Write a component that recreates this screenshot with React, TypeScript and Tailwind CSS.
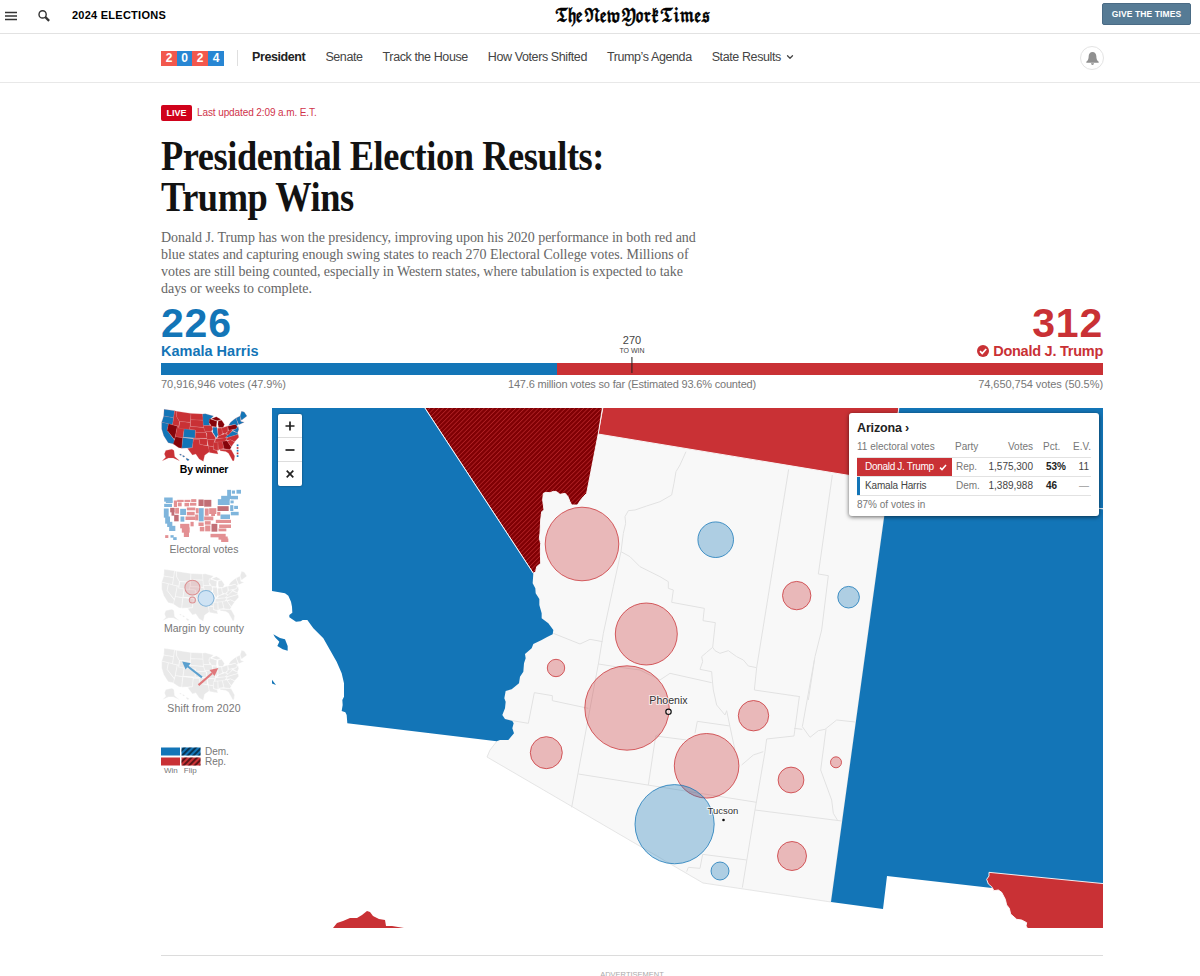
import React from 'react'
import { ChevronDown } from 'lucide-react'

type Party = 'rep' | 'dem'

const DEM = '#1375b7'
const REP = '#c93135'
const FLIP = '#85040a'

const navItems = ['Senate', 'Track the House', 'How Voters Shifted', 'Trump’s Agenda']

// [color, polygon points]
const states: [string, string][] = [
  [DEM, '45,30 76,34 73,55 44,50'],
  [DEM, '44,50 73,55 70,76 38,68'],
  [DEM, '38,68 58,73 54,92 76,122 74,133 57,129 44,108 38,88'],
  [FLIP, '58,73 84,79 77,116 74,118 54,92'],
  [REP, '76,34 81,36 82,52 90,66 88,80 70,76 73,55'],
  [REP, '81,36 124,42 122,68 90,66 82,52'],
  [REP, '91,66 122,69 120,91 88,88'],
  [REP, '84,79 88,80 88,86 104,88 100,114 78,111'],
  [FLIP, '78,111 100,114 97,145 88,144 72,133'],
  [DEM, '104,88 137,91 136,115 101,113'],
  [DEM, '100,114 131,117 128,144 97,145'],
  [REP, '124,42 158,44 160,62 123,61'],
  [REP, '123,61 160,62 161,83 122,81'],
  [REP, '121,81 161,84 167,99 137,98 137,91 120,90'],
  [REP, '137,98 168,99 171,116 136,115'],
  [REP, '131,116 171,117 172,137 150,134 148,119 131,119'],
  [REP, '131,119 148,119 150,134 175,139 178,156 164,166 160,184 148,177 138,162 128,165 114,146 128,144'],
  [DEM, '158,44 166,43 190,50 177,62 179,78 160,78'],
  [REP, '160,78 184,78 188,88 183,96 164,95'],
  [REP, '164,95 184,96 196,114 194,120 171,119 170,101'],
  [REP, '171,119 194,120 190,140 175,139'],
  [REP, '175,139 190,141 190,150 200,152 203,162 178,158'],
  [FLIP, '178,58 200,65 198,82 184,80 177,68'],
  [DEM, '188,83 200,83 203,105 198,115 188,98'],
  [FLIP, '204,64 214,62 222,75 218,84 205,84 203,74'],
  [FLIP, '184,58 198,52 212,60 200,64'],
  [REP, '202,86 214,85 217,103 204,110'],
  [REP, '214,85 232,79 232,95 224,103 216,100'],
  [REP, '200,116 206,108 224,102 232,106 224,116'],
  [REP, '196,117 230,114 224,126 194,128'],
  [REP, '190,128 203,127 203,152 190,149'],
  [REP, '203,127 216,126 221,146 208,148 204,152'],
  [FLIP, '216,125 230,123 242,142 238,149 221,147'],
  [REP, '208,148 238,149 242,150 252,168 250,182 246,182 234,160 226,155 210,153'],
  [REP, '230,124 240,120 252,127 242,141'],
  [REP, '226,122 232,113 262,104 264,113 252,126 240,120'],
  [DEM, '224,114 234,104 246,94 260,100 262,104 232,113'],
  [REP, '232,96 236,90 246,92 234,106 226,104'],
  [FLIP, '232,80 256,74 260,82 256,88 234,92'],
  [DEM, '234,78 240,68 250,60 256,56 262,74 258,80 254,74'],
  [DEM, '246,91 256,88 262,80 264,90 260,100'],
  [DEM, '256,56 268,50 270,66 280,68 264,76'],
  [DEM, '268,50 272,36 280,38 288,50 272,62'],
  [REP, '50,152 68,148 74,152 76,170 90,182 72,174 58,174 40,182 50,172 46,162'],
  [DEM, '91,162 96,163 95,167 91,165'],
  [DEM, '100,166 106,169 103,172 99,169'],
  [DEM, '110,174 119,179 115,183 110,179'],
]

// [color, x, y, width, height]
const evBlocks: [string, number, number, number, number][] = [
  ['d', 43, 293, 24, 11], ['d', 48, 304, 19, 4], ['d', 43, 312, 22, 8], ['d', 42, 326, 13, 26], ['d', 46, 350, 13, 20],
  ['d', 52, 366, 14, 14], ['d', 58, 378, 17, 14], ['f', 61, 324, 12, 12], ['f', 65, 336, 7, 10], ['r', 72, 302, 8, 18],
  ['r', 82, 300, 18, 5], ['r', 84, 308, 10, 10], ['r', 104, 300, 16, 5], ['r', 124, 298, 14, 7], ['r', 104, 309, 12, 9],
  ['r', 120, 309, 18, 7], ['r', 76, 324, 10, 16], ['f', 73, 345, 12, 18], ['d', 91, 327, 16, 17], ['r', 111, 323, 24, 7],
  ['r', 111, 336, 22, 9], ['d', 92, 350, 10, 14], ['r', 107, 350, 28, 9], ['r', 91, 372, 26, 12], ['r', 96, 383, 22, 14],
  ['r', 102, 396, 14, 14], ['r', 122, 366, 8, 12], ['f', 146, 299, 14, 18], ['f', 163, 300, 20, 19],
  ['d', 147, 325, 13, 38], ['r', 138, 325, 7, 14], ['r', 136, 344, 8, 16], ['r', 165, 326, 10, 20], ['r', 178, 325, 20, 16],
  ['r', 184, 340, 10, 7], ['r', 163, 350, 26, 10], ['f', 203, 319, 32, 13], ['d', 204, 298, 34, 16], ['d', 214, 288, 24, 12],
  ['d', 232, 270, 10, 26], ['d', 246, 272, 8, 8], ['d', 260, 270, 12, 10], ['d', 243, 288, 20, 9], ['d', 242, 302, 8, 7],
  ['d', 241, 316, 8, 16], ['d', 253, 318, 10, 8], ['d', 243, 336, 22, 9], ['d', 212, 344, 27, 12], ['r', 202, 336, 8, 10],
  ['r', 198, 360, 44, 8], ['r', 208, 374, 34, 9], ['r', 146, 368, 14, 9], ['r', 165, 364, 16, 9], ['r', 150, 381, 12, 12],
  ['r', 166, 377, 14, 16], ['f', 185, 372, 16, 22], ['r', 206, 386, 22, 7], ['r', 182, 402, 44, 9], ['r', 206, 410, 26, 8],
  ['r', 214, 416, 20, 9], ['d', 62, 406, 8, 6], ['d', 70, 412, 9, 7], ['r', 46, 406, 8, 7],
]
const evColor: Record<string, string> = { d: '#7fb5dc', r: '#e39093', f: '#c26f76' }

const circles: [Party, number, number, number][] = [
  ['rep', 582, 544, 36.8],
  ['dem', 715.7, 539.7, 17.8],
  ['rep', 796.7, 595.6, 14.2],
  ['dem', 848.6, 597.2, 10.8],
  ['rep', 646.3, 634, 31],
  ['rep', 556, 668, 8.7],
  ['rep', 627, 708, 42.2],
  ['rep', 546.3, 752.7, 16],
  ['rep', 753.5, 715.7, 15.2],
  ['rep', 706.6, 765.8, 32.3],
  ['rep', 791, 780, 12.9],
  ['rep', 836, 762.3, 5.5],
  ['dem', 674.6, 824.2, 39.6],
  ['dem', 720, 871, 9],
  ['rep', 792, 856, 14.5],
]

const MastheadBar = () => (
  <header className="flex h-[34px] items-start border-b border-[#e2e2e2]">
    <div className="flex w-[532px] items-center pt-[6px] pl-[5px]">
      <svg width="12" height="10" viewBox="0 0 12 10" className="mt-px">
        <path d="M0 1.5h12M0 5h12M0 8.5h12" stroke="#333" strokeWidth="1.6" />
      </svg>
      <svg width="12" height="12" viewBox="0 0 12 12" className="mt-px ml-[21px]">
        <circle cx="4.6" cy="4.4" r="3.6" fill="none" stroke="#333" strokeWidth="1.4" />
        <path d="M7.3 7l3.8 3.8" stroke="#333" strokeWidth="2.4" />
      </svg>
      <span className="ml-[22px] text-[11px] leading-[18px] font-bold tracking-[0.25px] text-black">2024 ELECTIONS</span>
    </div>
    <div className="flex w-[200px] justify-center pt-[4px] font-['DejaVu_Math_TeX_Gyre','DejaVu_Sans',serif] text-[18px] leading-[26px] whitespace-nowrap text-black">
      <span className="origin-center scale-x-[0.765] tracking-[-1.4px] [-webkit-text-stroke:0.6px_#000] [word-spacing:-2px]">𝕿𝖍𝖊 𝕹𝖊𝖜 𝖄𝖔𝖗𝖐 𝕿𝖎𝖒𝖊𝖘</span>
    </div>
    <div className="flex flex-1 justify-end pt-[3px] pr-[9px]">
      <button className="h-[22px] w-[89px] rounded-[2px] border border-[#4a6b85] bg-[#567b95] text-[8.5px] font-bold tracking-[0.1px] text-white">
        GIVE THE TIMES
      </button>
    </div>
  </header>
)

const SectionNav = () => (
  <nav className="h-[49px] border-b border-[#e8e8e8]">
    <div className="ml-[161px] flex h-12 w-[943px] items-center text-[12.5px] tracking-[-0.4px] text-[#444]">
      <div className="flex text-center text-[12px] leading-[15px] font-bold text-white">
        <span className="w-4 bg-[#f2584d]">2</span>
        <span className="w-[15px] bg-[#2886d3]">0</span>
        <span className="w-4 bg-[#f2584d]">2</span>
        <span className="w-4 bg-[#2886d3]">4</span>
      </div>
      <div className="mr-[14px] ml-[13px] h-4 w-px bg-[#dfdfdf]" />
      <div className="flex gap-5 pb-[2px] whitespace-nowrap">
        <span className="font-bold text-[#222]">President</span>
        {navItems.map((item) => (
          <span key={item}>{item}</span>
        ))}
        <span className="flex items-center">
          State Results
          <ChevronDown className="ml-1 size-[10px]" strokeWidth={3} />
        </span>
      </div>
      <div className="ml-auto flex size-6 items-center justify-center rounded-full border border-[#e4e4e4]">
        <svg width="13" height="13" viewBox="0 0 13 13" fill="#909090">
          <path d="M6.5 0C8.9 0 10.2 1.7 10.3 4c.1 3 .6 4.3 2.4 5.8v1H.3v-1C2.1 8.3 2.6 7 2.7 4 2.8 1.7 4.1 0 6.5 0zM5 11.3h3c-.1 1-.7 1.6-1.5 1.6S5.1 12.3 5 11.3z" />
        </svg>
      </div>
    </div>
  </nav>
)

const Scoreboard = () => (
  <section className="relative h-[84px]">
    <div className="flex justify-between font-bold">
      <div className="text-[#1375b7]">
        <div className="text-[41px] leading-[36px] tracking-[0.8px]">226</div>
        <div className="text-[14.5px] leading-[20px]">Kamala Harris</div>
      </div>
      <div className="text-right text-[#c93135]">
        <div className="text-[41px] leading-[36px] tracking-[0.8px]">312</div>
        <div className="flex items-center text-[14.5px] leading-[20px] tracking-[-0.25px]">
          <svg width="12" height="12" viewBox="0 0 12 12" className="mr-1">
            <circle cx="6" cy="6" r="6" fill={REP} />
            <path d="M3 6.2l2.2 2.2L9.2 4" fill="none" stroke="#fff" strokeWidth="1.7" />
          </svg>
          Donald J. Trump
        </div>
      </div>
    </div>
    <div className="mt-[2px] flex h-[12px]">
      <div className="w-[42%] bg-[#1375b7]" />
      <div className="flex-1 bg-[#c93135]" />
    </div>
    <div className="absolute top-[30px] left-1/2 flex -translate-x-1/2 flex-col items-center whitespace-nowrap text-[#444]">
      <span className="text-[11px] leading-[11px]">270</span>
      <span className="mt-[1px] text-[7px] leading-[8px]">TO WIN</span>
      <span className="mt-[2px] h-[16px] w-px bg-[#222]" />
    </div>
    <div className="mt-[3px] flex justify-between text-[11px] leading-[13px] tracking-[-0.05px] text-[#777]">
      <span>70,916,946 votes (47.9%)</span>
      <span className="tracking-[-0.18px]">147.6 million votes so far (Estimated 93.6% counted)</span>
      <span>74,650,754 votes (50.5%)</span>
    </div>
  </section>
)

const UsMap: React.FC<{ muted?: boolean; children?: React.ReactNode }> = ({ muted, children }) => (
  <svg width="88" height="56" viewBox="36 26 258 166" preserveAspectRatio="none">
    {states.map(([color, points]) => (
      <polygon
        key={points}
        points={points}
        fill={muted ? '#e9e9e9' : color}
        stroke={muted ? '#fff' : '#dd7f82'}
        strokeWidth={muted ? 1.1 : 0.6}
        strokeLinejoin="round"
      />
    ))}
    {children}
  </svg>
)

const ViewPicker = () => (
  <div className="flex w-[86px] flex-col text-center text-[10.5px] leading-[14px] text-[#777]">
    <div className="h-[80px]">
      <UsMap>
        {[134, 142, 150, 158, 166].map((y, i) => (
          <rect key={y} x="258" y={y} width="5" height="5" fill={i === 1 || i === 3 ? REP : DEM} />
        ))}
      </UsMap>
      <div className="-mt-[2px] font-bold tracking-[-0.2px] text-black">By winner</div>
    </div>
    <div className="h-[80px]">
      <svg width="88" height="56" viewBox="33 264 264 168">
        {evBlocks.map(([c, x, y, w, h]) => (
          <rect key={`${x}-${y}-${w}`} x={x - 0.5} y={y - 0.5} width={w + 1.5} height={h + 1.5} fill={evColor[c]} />
        ))}
      </svg>
      <div className="-mt-[2px]">Electoral votes</div>
    </div>
    <div className="h-[79px]">
      <UsMap muted>
        <circle cx="128" cy="84" r="22" fill={REP} fillOpacity="0.15" stroke="#dc9092" strokeWidth="3" />
        <circle cx="128" cy="121" r="9" fill={REP} fillOpacity="0.15" stroke="#dc9092" strokeWidth="3" />
        <circle cx="168" cy="116" r="23.5" fill="#cfe3f4" stroke="#83b4d9" strokeWidth="3" />
      </UsMap>
      <div className="-mt-[3px]">Margin by county</div>
    </div>
    <div className="h-[80px]">
      <UsMap muted>
        <path d="M156 116L114 83" stroke="#5ba0cf" strokeWidth="6" />
        <polygon points="98,69 108,93 123,74" fill="#5ba0cf" />
        <path d="M146 139L186 104" stroke="#e0787b" strokeWidth="6" />
        <polygon points="204,88 178,94 193,112" fill="#e0787b" />
      </UsMap>
      <div className="-mt-[2px] tracking-[0.15px]">Shift from 2020</div>
    </div>
    <Legend />
  </div>
)

const Legend = () => (
  <div className="mt-[20px] flex text-left">
    <svg width="40" height="19" viewBox="0 0 40 19">
      <defs>
        <pattern id="legendHatch" width="4" height="4" patternUnits="userSpaceOnUse" patternTransform="rotate(45)">
          <rect width="2" height="4" fill="#000" fillOpacity="0.55" />
        </pattern>
      </defs>
      <rect width="19" height="8" y="0.5" fill={DEM} />
      <rect width="19" height="8" x="20.5" y="0.5" fill={DEM} />
      <rect width="19" height="8" y="10.5" fill={REP} />
      <rect width="19" height="8" x="20.5" y="10.5" fill={REP} />
      <rect width="19" height="8" x="20.5" y="0.5" fill="url(#legendHatch)" />
      <rect width="19" height="8" x="20.5" y="10.5" fill="url(#legendHatch)" />
    </svg>
    <div className="ml-[4px] text-[10px] leading-[10px]">
      <div>Dem.</div>
      <div>Rep.</div>
    </div>
  </div>
)

const ArizonaMap = () => (
  <svg width="831" height="520" viewBox="272 408 831 520">
    <defs>
      <pattern id="flip" width="3.2" height="3.2" patternUnits="userSpaceOnUse" patternTransform="rotate(45) scale(3)">
        <rect width="3.2" height="3.2" fill="#800004" />
        <rect width="0.7" height="3.2" fill="#b8262b" />
      </pattern>
    </defs>

    <polygon
      points="545,490 598,434 889,482 831,902 703,883 487,757 490,750 497,741 495,700 520,560"
      fill="#f8f8f8"
      stroke="#e0e0e0"
      strokeWidth="0.8"
    />

    {/* county lines */}
    <g fill="none" stroke="#e2e2e2" strokeWidth="3">
      <g transform="translate(580 400) scale(0.33333)">
        <path d="M318 155L300 195 288 215 282 250 275 285 240 305 200 318 165 330 145 332 135 350 137 370 130 400 123 455 100 560 70 700 55 793" />
        <path d="M123 455L150 470 180 500 210 515 240 530 265 545 265 565 280 570 275 607 373 625 369 662 406 668 398 742 380 757 365 770 368 785 360 808 395 815 397 840" />
        <path d="M398 742L405 752 420 760 445 752 470 770 490 780 505 798 530 803M626 208L530 803 523 870 660 890" />
        <path d="M757 225L715 522 745 527 725 690 705 770 685 900M-80 700L-30 720 0 732 30 718 68 725" />
      </g>
      <g transform="translate(480 660) scale(0.33333)">
        <path d="M355 12L420 22 480 30 540 60 570 40 695 68M355 12L275 442M697 60L700 90 710 135 735 165 740 152 750 200 765 270" />
        <path d="M958 110L942 228 860 237 855 275 825 450 787 683M825 450L1085 483M850 275L820 285 785 315" />
        <path d="M1003 0L967 200 990 232 1015 212 1035 208 1070 180 1125 186M942 205L967 208M1038 208L1022 330 1055 420 1060 460 1072 480" />
        <path d="M295 342L830 427M540 220L527 228 505 375M527 228L620 240M645 220L652 184 750 198" />
        <path d="M85 180L145 190 163 98 217 107 217 122 325 145M620 635L625 622 660 625 668 583 800 600" />
      </g>
    </g>

    {/* surrounding states */}
    <g stroke="#fff" strokeWidth="0.9" strokeLinejoin="round">
      <polygon points="603,407 899,407 889,482 598,434" fill={REP} />
      <polygon points="899,407 1104,407 1104,509 889,482" fill={DEM} />
      <polygon points="889,482 1104,509 1104,884 992,888 887,876 883,909 831,902" fill={DEM} stroke="none" />
      <path d="M889 482L1104 509" />
    </g>
    <path
      transform="translate(800 840) scale(0.33333)"
      d="M567 97L912 131 912 266 683 266 678 258 680 248 665 240 650 238 632 222 628 205 620 195 616 178 605 157 595 150 582 152 575 140 565 132 560 118 567 108z"
      fill={REP}
      stroke="#fff"
      strokeWidth="2.7"
    />
    <g transform="translate(270 400) scale(0.33333)">
      <path
        d="M462 20L998 20 985 100 950 280 940 290 932 300 922 315 905 315 900 305 893 288 885 280 870 283 860 275 850 274 840 278 828 277 820 280 818 300 822 330 815 335 812 360 810 400 808 415 812 430 811 450 812 490 800 500 797 515 790 520z"
        fill="url(#flip)"
        stroke="#fff"
        strokeWidth="2.7"
      />
      <path
        d="M5 20L462 20 790 520 788 550 796 565 797 580 808 597 808 615 815 640 815 655 835 670 850 690 848 703 830 712 815 720 790 732 785 745 765 762 767 775 762 790 760 815 750 830 747 850 725 868 707 873 703 895 707 905 705 925 697 945 705 957 727 963 731 970 727 985 732 1000 715 1020 690 1020 680 1024 232 970 230 945 226 937 215 933 218 915 217 900 222 890 222 850 215 820 200 785 180 750 160 715 130 685 112 660 98 660 92 664 78 665 58 652 58 645 67 638 66 620 63 605 55 587 45 580 5 573z"
        fill={DEM}
      />
      <path d="M462 20L790 520" stroke="#fff" strokeWidth="2.7" />
      <path d="M10 703L30 714 45 718 53 738 53 752 38 748 22 738 28 725 15 712zM5 838L18 855 5 850z" fill={DEM} />
    </g>
    <polygon
      points="333,928 337,923 343,921 350,918 357,918 362,915 367,911 370,912 373,916 379,919 385,920 386,926 392,926 398,927 404,928"
      fill={REP}
    />

    {circles.map(([party, cx, cy, r]) => (
      <circle
        key={`${cx}-${cy}`}
        cx={cx}
        cy={cy}
        r={r}
        fill={party === 'rep' ? REP : DEM}
        fillOpacity="0.32"
        stroke={party === 'rep' ? REP : DEM}
        strokeOpacity="0.85"
        strokeWidth="0.9"
      />
    ))}

    <g textAnchor="middle" fill="#333" stroke="#fff" strokeOpacity="0.7" strokeWidth="2" paintOrder="stroke">
      <text x="668.5" y="704" fontSize="10.6">Phoenix</text>
      <text x="723" y="814" fontSize="9.5">Tucson</text>
    </g>
    <circle cx="668.5" cy="711.8" r="2.7" fill="#fff" fillOpacity="0.6" stroke="#111" strokeWidth="1.2" />
    <circle cx="723.5" cy="820" r="1.3" fill="#111" />
  </svg>
)

const ZoomControls = () => (
  <div className="absolute top-[6px] left-[6px] flex w-6 flex-col divide-y divide-[#ddd] rounded-[2px] bg-white shadow-[0_0_2px_rgba(0,0,0,0.5)]">
    {['M1.5 6h9M6 1.5v9', 'M1.5 6h9', 'M2.7 2.7l6.6 6.6M9.3 2.7L2.7 9.3'].map((d) => (
      <button key={d} className="flex h-6 items-center justify-center">
        <svg width="12" height="12" viewBox="0 0 12 12">
          <path d={d} stroke="#222" strokeWidth="1.7" />
        </svg>
      </button>
    ))}
  </div>
)

const StateTooltip = () => (
  <div className="absolute top-[5px] right-[4px] h-[103px] w-[250px] rounded-[3px] bg-white px-2 pt-[7px] text-[10px] text-[#777] shadow-[0_1px_4px_rgba(0,0,0,0.6)]">
    <div className="text-[12.5px] leading-[17px] font-bold tracking-[-0.15px] text-[#222]">Arizona ›</div>
    <div className="grid grid-cols-[94px_32px_50px_34px_24px] leading-[18px] whitespace-nowrap">
      <span className="h-[19px] leading-[20px]">11 electoral votes</span>
      <span className="pl-1 leading-[20px]">Party</span>
      <span className="text-right leading-[20px]">Votes</span>
      <span className="pl-[10px] leading-[20px]">Pct.</span>
      <span className="text-right leading-[20px]">E.V.</span>
    </div>
    <div className="grid h-[19px] grid-cols-[95px_31px_50px_34px_22px] border-t border-[#e2e2e2] leading-[18px] whitespace-nowrap">
      <span className="flex items-center bg-[#c93135] pl-2 tracking-[-0.3px] text-white">
        Donald J. Trump
        <svg width="8" height="7" viewBox="0 0 8 7" className="ml-[5px]">
          <path d="M1 3.6l2 2L7 1" fill="none" stroke="#fff" strokeWidth="1.5" />
        </svg>
      </span>
      <span className="pl-1">Rep.</span>
      <span className="text-right text-[#444]">1,575,300</span>
      <span className="pl-[13px] font-bold text-[#222]">53%</span>
      <span className="text-right text-[#444]">11</span>
    </div>
    <div className="grid h-[20px] grid-cols-[95px_31px_50px_34px_22px] border-y border-[#e2e2e2] leading-[18px] whitespace-nowrap">
      <span className="border-l-[3px] border-[#1375b7] pl-[5px] tracking-[-0.15px] text-[#444]">Kamala Harris</span>
      <span className="pl-1">Dem.</span>
      <span className="text-right text-[#444]">1,389,988</span>
      <span className="pl-[13px] font-bold text-[#222]">46</span>
      <span className="text-right text-[#999]">—</span>
    </div>
    <div className="leading-[17px]">87% of votes in</div>
  </div>
)

export default function App() {
  return (
    <div className="h-[976px] overflow-hidden bg-white font-['Liberation_Sans',Arial,sans-serif]">
      <MastheadBar />
      <SectionNav />
      <main className="ml-[161px] w-[942px]">
        <div className="flex items-center pt-[22px] text-[10px] leading-4">
          <span className="w-[31px] rounded-[2px] bg-[#d0021b] text-center text-[9px] font-bold text-white">LIVE</span>
          <span className="ml-[5px] tracking-[-0.1px] text-[#d0334a]">Last updated 2:09 a.m. E.T.</span>
        </div>
        <h1 className="mt-[15px] w-[700px] origin-left scale-x-[0.866] font-['Liberation_Serif',serif] text-[42px] leading-[41px] font-bold tracking-[-0.5px] text-[#121212]">
          Presidential Election Results:
          <br />
          Trump Wins
        </h1>
        <p className="mt-[11px] font-['Liberation_Serif',serif] text-[14px] leading-[17px] tracking-[-0.04px] whitespace-nowrap text-[#666]">
          Donald J. Trump has won the presidency, improving upon his 2020 performance in both red and
          <br />
          blue states and capturing enough swing states to reach 270 Electoral College votes. Millions of
          <br />
          votes are still being counted, especially in Western states, where tabulation is expected to take
          <br />
          days or weeks to complete.
        </p>
        <div className="mt-[8px]">
          <Scoreboard />
        </div>
        <div className="mt-[19px] flex justify-between">
          <div>
            <ViewPicker />
            <div className="-mt-px flex gap-[6px] pl-[3px] text-[8px] leading-[9px] text-[#777]">
              <span>Win</span>
              <span>Flip</span>
            </div>
          </div>
          <div className="relative">
            <ArizonaMap />
            <ZoomControls />
            <StateTooltip />
          </div>
        </div>
        <div className="mt-[27px] border-t border-[#dcdcdc] pt-[14px] text-center text-[7.5px] leading-[10px] text-[#aaa]">ADVERTISEMENT</div>
      </main>
    </div>
  )
}
